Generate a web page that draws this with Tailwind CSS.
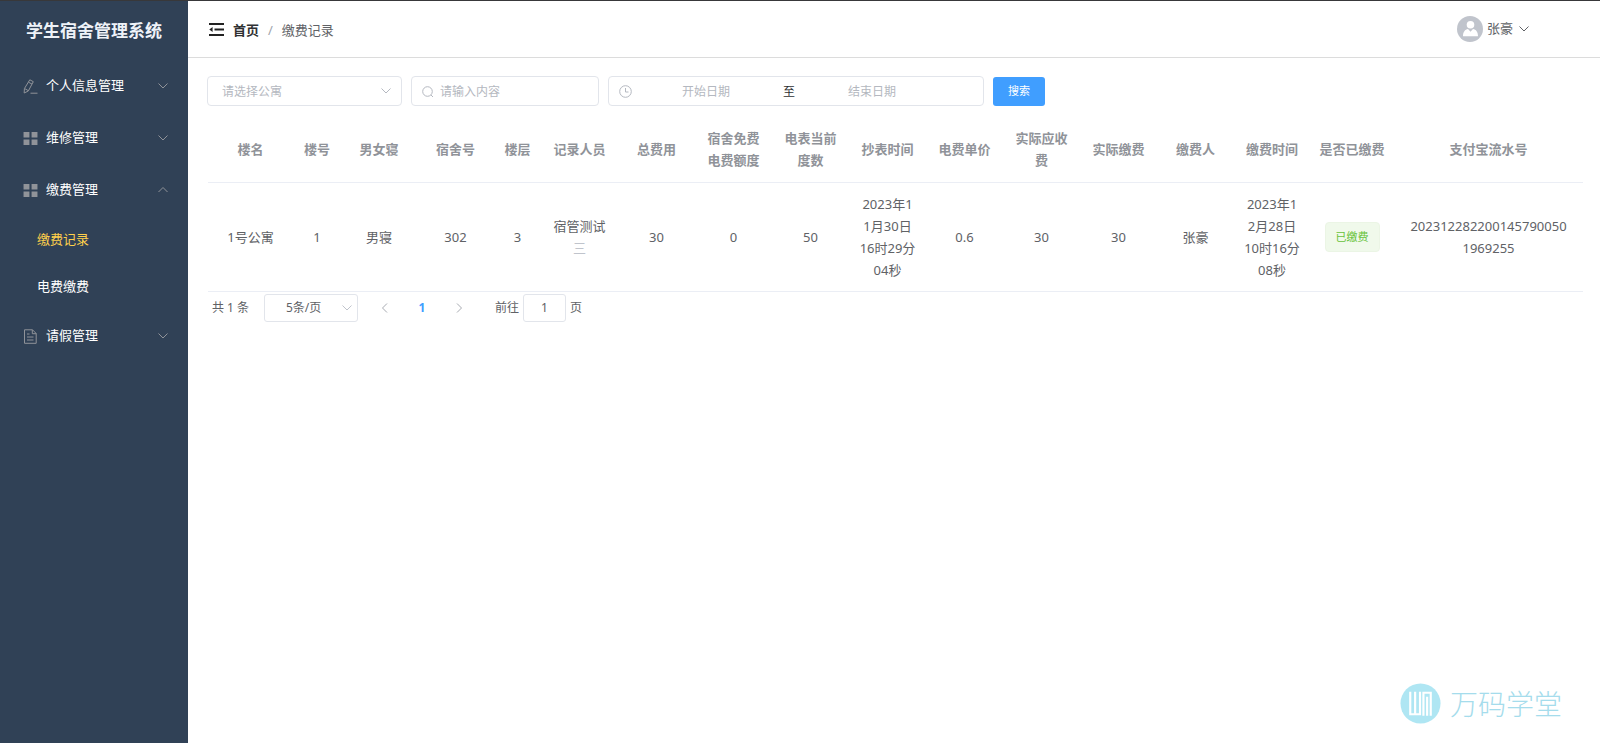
<!DOCTYPE html>
<html lang="zh-CN">
<head>
<meta charset="utf-8">
<title>学生宿舍管理系统</title>
<script src="https://cdn.jsdelivr.net/npm/@tailwindcss/browser@4"></script>
</head>
<body class="relative flex min-h-screen border-t border-[#38383a] bg-white font-['Noto_Sans','Noto_Sans_CJK_SC',sans-serif] text-[13px] text-[#606266]">
<svg class="hidden">
  <symbol id="down" viewBox="0 0 12 12"><path d="M1.500 3.500 6 8l4.500-4.500" fill="none" stroke="currentColor"/></symbol>
  <symbol id="up" viewBox="0 0 12 12"><path d="M1.500 8 6 3.500 10.500 8" fill="none" stroke="currentColor"/></symbol>
  <symbol id="grid" viewBox="0 0 14 14"><path d="M.5 1h5.500v5H.500zM8 1h5.500v5H8zM.5 8h5.500v5H.500zM8 8h5.500v5H8z" fill="currentColor"/></symbol>
</svg>

<aside class="w-[188px] shrink-0 bg-[#304156] text-white">
  <h1 class="flex h-[59px] items-center justify-center text-[17px] font-bold text-[#eef2f8]">学生宿舍管理系统</h1>
  <nav>
    <button type="button" class="flex h-[52px] w-full items-center pr-[19px] pl-[23px] text-left">
      <svg class="mr-2 size-[15px] text-[#909399]" viewBox="0 0 15 15" fill="none" stroke="currentColor"><path d="M6.800.8 10.300 2.700 5.300 12 1.200 14l.2-4.400zM5.500 3.200l3.500 1.900M1.800 9.600l3.300 2M7.500 14.200h7"/></svg>
      <span class="flex-1">个人信息管理</span>
      <svg class="size-3 text-[#909399]"><use href="#down"/></svg>
    </button>
    <button type="button" class="flex h-[52px] w-full items-center pr-[19px] pl-[23px] text-left">
      <svg class="mr-2 size-[15px] text-[#909399]"><use href="#grid"/></svg>
      <span class="flex-1">维修管理</span>
      <svg class="size-3 text-[#909399]"><use href="#down"/></svg>
    </button>
    <button type="button" class="flex h-[52px] w-full items-center pr-[19px] pl-[23px] text-left">
      <svg class="mr-2 size-[15px] text-[#909399]"><use href="#grid"/></svg>
      <span class="flex-1">缴费管理</span>
      <svg class="size-3 text-[#909399]"><use href="#up"/></svg>
    </button>
    <a href="#" class="flex h-[47px] items-center pl-[37px] text-[#ffd04b]">缴费记录</a>
    <a href="#" class="flex h-[47px] items-center pl-[37px]">电费缴费</a>
    <button type="button" class="flex h-[52px] w-full items-center pr-[19px] pl-[23px] text-left">
      <svg class="mr-2 size-[15px] text-[#909399]" viewBox="0 0 15 15" fill="none" stroke="currentColor"><path d="M1.500.8h8l3.700 3.700v9.800H1.500zM9.300.8v3.900h3.900M4 5h2.500M4 8h6.500M4 11h6.500"/></svg>
      <span class="flex-1">请假管理</span>
      <svg class="size-3 text-[#909399]"><use href="#down"/></svg>
    </button>
  </nav>
</aside>

<div class="flex min-w-0 flex-1 flex-col">
  <header class="flex h-[57px] items-center border-b border-[#dcdcdc] pr-[70px] pl-[21px]">
    <button type="button" aria-label="折叠菜单" class="mr-[9px] text-[#222]">
      <svg class="size-[15px]" viewBox="0 0 15 15" fill="currentColor"><path d="M0 1h15v2H0zM5.500 6.500H15v2H5.500zM0 12h15v2H0zM3.600 5v5L.3 7.500z"/></svg>
    </button>
    <nav class="flex flex-1 items-center pt-1">
      <a href="#" class="font-bold text-[#303133]">首页</a>
      <span class="mx-[9px] text-[#a0a4ac]">/</span>
      <span>缴费记录</span>
    </nav>
    <button type="button" class="flex items-center">
      <svg class="mr-1 size-[26px]" viewBox="0 0 26 26"><circle cx="13" cy="13" r="13" fill="#c0c4cc"/><circle cx="13.500" cy="8.700" r="3.800" fill="#fff"/><path d="M6 20.300c0-4.500 2-6.800 5-7.300l2.500 2.700L16 13c3 .5 5 2.800 5 7.300z" fill="#fff"/></svg>
      <span>张豪</span>
      <svg class="ml-[5px] size-3"><use href="#down"/></svg>
    </button>
  </header>

  <main class="pt-[18px] pr-[17px] pl-5">
    <form class="flex items-center text-xs">
      <div class="relative -ml-px w-[195px]">
        <select aria-label="公寓" class="h-[30px] w-full appearance-none rounded-[4px] border border-[#e2e5eb] pt-px pl-[14px] text-[#b4b8c0]"><option>请选择公寓</option></select>
        <svg class="absolute top-[9px] right-[10px] size-3 text-[#b4b8c0]"><use href="#down"/></svg>
      </div>
      <label class="ml-[9px] flex h-[30px] w-[188px] items-center rounded-[4px] border border-[#e2e5eb] pt-px pl-[10px]">
        <svg class="mr-[6px] size-3 shrink-0 text-[#b4b8c0]" viewBox="0 0 12 12" fill="none" stroke="currentColor"><circle cx="5.500" cy="5.500" r="4.800"/><path d="m9 9 2 2"/></svg>
        <input type="text" aria-label="内容" placeholder="请输入内容" class="w-full min-w-0 outline-none placeholder:text-[#b4b8c0]">
      </label>
      <div class="ml-[9px] flex h-[30px] w-[376px] items-center rounded-[4px] border border-[#e2e5eb] pt-px pl-[10px]">
        <svg class="size-[13px] shrink-0 text-[#b4b8c0]" viewBox="0 0 13 13" fill="none" stroke="currentColor"><circle cx="6.500" cy="6.500" r="5.800"/><path d="M6.500 3v4h3"/></svg>
        <input type="text" aria-label="开始日期" placeholder="开始日期" class="w-[148px] text-center outline-none placeholder:text-[#b4b8c0]">
        <span class="w-[18px] text-center text-[#303133]">至</span>
        <input type="text" aria-label="结束日期" placeholder="结束日期" class="w-[148px] text-center outline-none placeholder:text-[#b4b8c0]">
      </div>
      <button type="submit" class="mt-px ml-[9px] h-[29px] w-[52px] rounded-[3px] bg-[#409eff] text-[11px] text-white">搜索</button>
    </form>

    <table class="mt-[11px] w-full table-fixed text-center leading-[22px]">
      <colgroup>
        <col class="w-[85px]"><col class="w-[48px]"><col class="w-[76px]"><col class="w-[77px]"><col class="w-[47px]">
        <col class="w-[77px]"><col class="w-[77px]"><col class="w-[77px]"><col class="w-[77px]"><col class="w-[77px]">
        <col class="w-[77px]"><col class="w-[77px]"><col class="w-[77px]"><col class="w-[77px]"><col class="w-[76px]">
        <col class="w-[84px]"><col>
      </colgroup>
      <thead class="text-[#909399]">
        <tr class="h-[65px] border-b border-[#ebeef5]">
          <th>楼名</th><th>楼号</th><th>男女寝</th><th>宿舍号</th><th>楼层</th><th>记录人员</th><th>总费用</th>
          <th>宿舍免费<br>电费额度</th><th>电表当前<br>度数</th><th>抄表时间</th><th>电费单价</th><th>实际应收<br>费</th>
          <th>实际缴费</th><th>缴费人</th><th>缴费时间</th><th>是否已缴费</th><th>支付宝流水号</th>
        </tr>
      </thead>
      <tbody>
        <tr class="h-[109px] border-b border-[#ebeef5]">
          <td>1号公寓</td><td>1</td><td>男寝</td><td>302</td><td>3</td>
          <td>宿管测试<br><span class="text-[#c0c4cc]">三</span></td>
          <td>30</td><td>0</td><td>50</td>
          <td>2023年1<br>1月30日<br>16时29分<br>04秒</td>
          <td>0.6</td><td>30</td><td>30</td><td>张豪</td>
          <td>2023年1<br>2月28日<br>10时16分<br>08秒</td>
          <td><span class="inline-flex h-[30px] items-center rounded-[4px] border border-[#ebf5e5] bg-[#f0f9eb] px-[10px] text-[11px] text-[#67c23a]">已缴费</span></td>
          <td>202312282200145790050<br>1969255</td>
        </tr>
      </tbody>
    </table>

    <div class="mt-[2px] flex h-7 items-center pl-1 text-xs">
      <span class="w-[39px] whitespace-nowrap">共 1 条</span>
      <div class="relative ml-[13px] w-[94px]">
        <select aria-label="每页条数" class="h-7 w-full appearance-none rounded-[3px] border border-[#e2e5eb] pl-[21px]"><option>5条/页</option></select>
        <svg class="absolute top-2 right-[5px] size-3 text-[#c0c4cc]"><use href="#down"/></svg>
      </div>
      <button type="button" aria-label="上一页" class="ml-[21px] text-[#a8abb2]"><svg class="size-3" viewBox="0 0 12 12" fill="none" stroke="currentColor"><path d="M8 1.500 3.500 6 8 10.500"/></svg></button>
      <button type="button" class="w-[62px] text-center font-bold text-[#409eff]">1</button>
      <button type="button" aria-label="下一页" class="text-[#a8abb2]"><svg class="size-3" viewBox="0 0 12 12" fill="none" stroke="currentColor"><path d="M4 1.500 8.500 6 4 10.500"/></svg></button>
      <label class="ml-[30px] flex items-center">前往
        <input type="text" value="1" class="mx-1 h-7 w-[43px] rounded-[3px] border border-[#e2e5eb] text-center">页
      </label>
    </div>
  </main>
</div>

<div class="absolute right-[38px] bottom-[19px] flex items-center gap-[9px] text-[#a5dcec]">
  <svg class="size-[41px]" viewBox="0 0 42 42"><circle cx="21" cy="21" r="20.500" fill="#afe6f3"/><path d="M10.500 9v23h10V9M15.500 9v23M24 33.500V10h7.500v23.500M27.800 14v19.500" fill="none" stroke="#fff" stroke-width="2.200"/></svg>
  <span class="text-[28px] leading-10 font-light">万码学堂</span>
</div>
</body>
</html>
